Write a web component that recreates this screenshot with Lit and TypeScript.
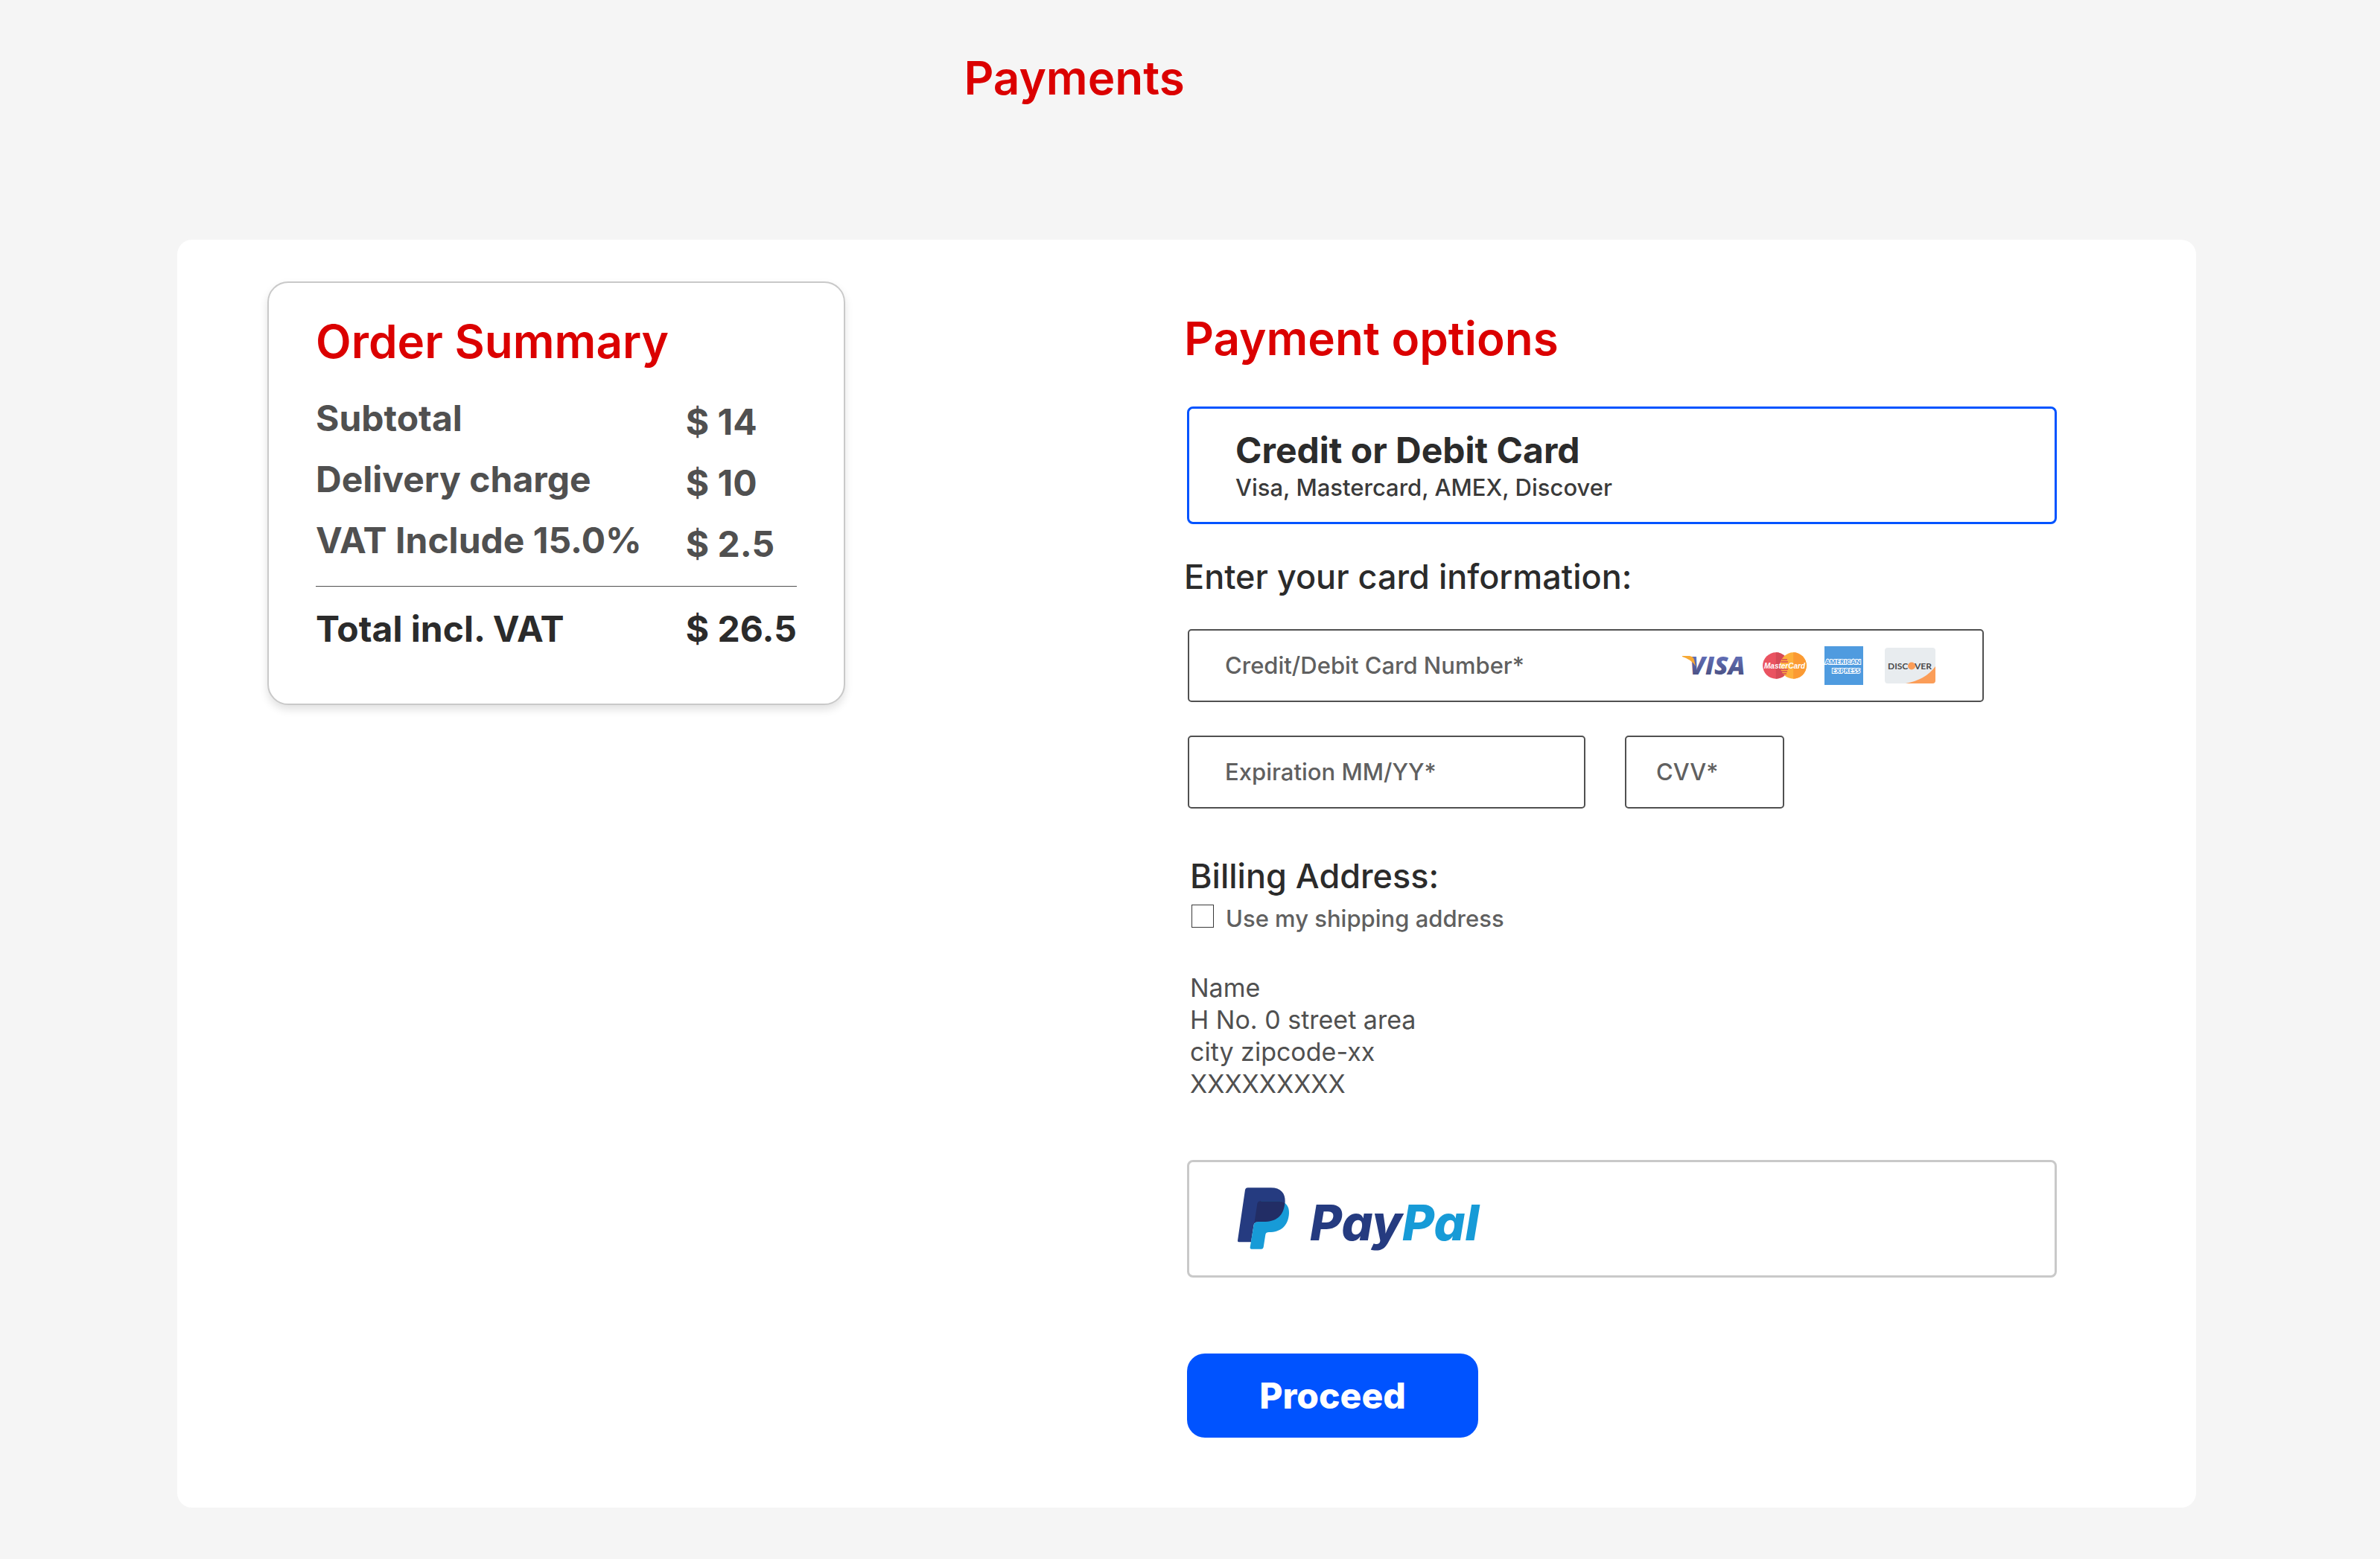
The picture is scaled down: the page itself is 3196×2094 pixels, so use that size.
import { LitElement, html, css, svg } from "lit";
import { customElement, property, state } from "lit/decorators.js";

interface Line {
  label: string;
  amount: string;
}

const LINES: Line[] = [
  { label: "Subtotal", amount: "$ 14" },
  { label: "Delivery charge", amount: "$ 10" },
  { label: "VAT Include 15.0%", amount: "$ 2.5" },
];

const visa = svg`
  <svg width="88" height="52" viewBox="0 -13 88 52" role="img" aria-label="Visa">
    <defs>
      <linearGradient id="visa-ink" x1="0" y1="0" x2="0" y2="1">
        <stop offset="0.3" stop-color="#5f6bb2" />
        <stop offset="0.9" stop-color="#484d7c" />
      </linearGradient>
    </defs>
    <text x="10" y="25" class="visa" fill="url(#visa-ink)">VISA</text>
    <path d="M0 0H10Q15 1 16 5L18 14Q13 5 0 1Z" fill="#f7a934" />
  </svg>`;

const mastercard = svg`
  <svg width="59" height="36" viewBox="0 0 59 36" role="img" aria-label="MasterCard">
    <circle cx="17.8" cy="18" r="17.7" fill="#ea5361" />
    <path d="M17.8 .3a17.7 17.7 0 0 1 0 35.4Z" fill="#d64a57" />
    <circle cx="41.2" cy="18" r="17.7" fill="#fdb03c" />
    <path d="M41.2 .3a17.7 17.7 0 0 1 0 35.4Z" fill="#fb9a33" />
    <path d="M26 10h7M25 13h9M24 23h10M25 26h8M27 29h5" stroke="#d64a57" stroke-width="1.4" />
    <text x="2" y="22" class="mc">MasterCard</text>
  </svg>`;

const amex = svg`
  <svg width="52" height="52" viewBox="0 0 52 52" role="img" aria-label="American Express">
    <rect width="52" height="52" fill="#4f9bdf" />
    <text x="1" y="24" class="amex">AMERICAN</text>
    <text x="10" y="36" class="amex">EXPRESS</text>
  </svg>`;

const discover = svg`
  <svg width="68" height="48" viewBox="0 0 68 48" role="img" aria-label="Discover">
    <rect width="68" height="48" rx="4" fill="#e8ecef" />
    <path d="M28 48Q55 43 68 25V44Q68 48 64 48Z" fill="#fb9d58" />
    <text x="4" y="29" class="disc">DISC</text>
    <circle cx="36" cy="24.5" r="5" fill="#fb9d58" />
    <text x="40" y="29" class="disc">VER</text>
  </svg>`;

const paypal = svg`
  <svg width="330" height="84" viewBox="0 0 330 84" role="img" aria-label="PayPal" overflow="visible">
    <g transform="scale(.3333) translate(-66 -74)">
      <path fill="#253b80" d="M107 75H200C240 75 258 98 257 130C255 185 225 212 170 212H148Q134 212 131 224L120 294H71Q65 294 66 288L96 84Q98 75 107 75Z" />
      <path fill="#179bd7" d="M160 129H235C262 133 274 152 273 178C270 228 240 254 192 254Q180 254 178 264L170 315Q169 322 162 322H121Q115 322 116 315L131 224Q134 212 148 212L160 129Z" />
      <path fill="#222d65" d="M158 129H236Q248 131 256 136C252 188 222 212 170 212H148Q137 212 133 219L145 139Q147 130 158 129Z" />
    </g>
    <text x="97" y="71" class="pp"><tspan fill="#253b80">Pay</tspan><tspan fill="#179bd7">Pal</tspan></text>
  </svg>`;

@customElement("order-summary")
export class OrderSummary extends LitElement {
  @property({ attribute: false }) lines: Line[] = [];
  @property() total = "";

  static styles = css`
    :host {
      display: block;
      box-sizing: border-box;
      padding: 41px 63px 71px;
      border: 2px solid #c9c9c9;
      border-radius: 28px;
      background: #fff;
      box-shadow: 0 6px 12px rgba(0, 0, 0, 0.12);
    }
    h2 {
      margin: 0 0 36px;
      color: #db0000;
      font-size: 62px;
      line-height: 76px;
      font-weight: 600;
    }
    table {
      width: 100%;
      border-collapse: collapse;
      font-size: 48px;
      line-height: 58px;
      font-weight: 700;
      color: #505050;
      white-space: nowrap;
    }
    th,
    td {
      padding: 0 0 24px;
      text-align: left;
      font-weight: inherit;
      vertical-align: top;
    }
    td {
      width: 23%;
    }
    tbody td {
      padding: 5px 0 19px;
    }
    tbody tr:last-child th {
      padding-bottom: 32px;
    }
    tfoot {
      color: #2b2b2b;
      border-top: 1px solid #505050;
    }
    tfoot th,
    tfoot td {
      padding: 28px 0 0;
    }
  `;

  render() {
    return html`
      <h2>Order Summary</h2>
      <table>
        <tbody>
          ${this.lines.map(
            (l) => html`<tr><th scope="row">${l.label}</th><td>${l.amount}</td></tr>`
          )}
        </tbody>
        <tfoot>
          <tr><th scope="row">Total incl. VAT</th><td>${this.total}</td></tr>
        </tfoot>
      </table>
    `;
  }
}

@customElement("payment-form")
export class PaymentForm extends LitElement {
  @state() private method = "card";

  static styles = css`
    :host {
      display: block;
      padding-top: 39px;
    }
    form {
      display: flex;
      flex-direction: column;
    }
    h2 {
      margin: 0;
      color: #db0000;
      font-size: 62px;
      line-height: 76px;
      font-weight: 600;
    }
    h3 {
      margin: 0;
      color: #2b2b2b;
      font-size: 45px;
      line-height: 54px;
      font-weight: 500;
    }
    .option {
      position: relative;
      display: flex;
      box-sizing: border-box;
      min-height: 158px;
      margin-left: 4px;
      padding: 27px 62px;
      border: 3px solid #c9c9c9;
      border-radius: 8px;
      cursor: pointer;
    }
    .option.selected {
      border-color: #0053ff;
    }
    .option input {
      position: absolute;
      opacity: 0;
      margin: 0;
    }
    .card {
      margin-top: 53px;
      flex-direction: column;
      gap: 2px;
    }
    .title {
      color: #2b2b2b;
      font-size: 48px;
      line-height: 58px;
      font-weight: 700;
    }
    .hint {
      color: #3a3a3a;
      font-size: 31px;
      line-height: 38px;
      font-weight: 500;
    }
    .info {
      margin-top: 44px;
    }
    .fields {
      display: grid;
      grid-template-columns: minmax(0, 534fr) minmax(0, 214fr) minmax(0, 215fr);
      column-gap: 53px;
      row-gap: 45px;
      margin: 43px 98px 0 5px;
    }
    .field {
      display: flex;
      align-items: center;
      box-sizing: border-box;
      height: 98px;
      border: 2px solid #505050;
      border-radius: 5px;
      padding: 0 48px;
    }
    .number {
      grid-column: 1 / 4;
      padding-right: 63px;
    }
    .cvv {
      padding: 0 40px;
    }
    .field input {
      flex: 1;
      min-width: 0;
      padding: 0;
      border: 0;
      outline: 0;
      background: none;
      font: inherit;
      font-size: 31px;
      line-height: 38px;
      font-weight: 500;
      color: #2b2b2b;
    }
    .field input::placeholder {
      color: #606060;
      opacity: 1;
    }
    .brands {
      display: flex;
      align-items: center;
      gap: 24px;
    }
    .brands svg:first-child {
      margin-right: -4px;
    }
    .brands svg:last-child {
      margin-left: 5px;
    }
    .visa {
      font: italic 800 34px "Open Sans", sans-serif;
    }
    .mc {
      font: italic 700 10px "Liberation Sans", sans-serif;
      fill: #fff;
    }
    .amex {
      font: 700 9px "Open Sans", sans-serif;
      fill: #4f9bdf;
      stroke: #fff;
      stroke-width: 2px;
      paint-order: stroke;
    }
    .disc {
      font: 700 12px Lato, sans-serif;
      fill: #4a4a4a;
    }
    .pp {
      font: italic 800 66px Inter, sans-serif;
    }
    .billing {
      padding-left: 8px;
      margin-top: 64px;
    }
    .same {
      display: flex;
      gap: 16px;
      margin-top: 11px;
      padding-left: 2px;
      color: #606060;
      font-size: 31px;
      line-height: 38px;
      font-weight: 500;
    }
    .same input {
      appearance: none;
      box-sizing: border-box;
      width: 30px;
      height: 31px;
      margin: 0;
      border: 1px solid #3a3a3a;
      background: #fff;
    }
    .same input:checked {
      background: #0053ff;
    }
    address {
      margin-top: 52px;
      color: #505050;
      font-size: 34px;
      line-height: 43px;
      font-style: normal;
    }
    address p {
      margin: 0;
    }
    .paypal {
      margin-top: 81px;
      align-items: center;
      padding: 0 65px;
    }
    button {
      align-self: flex-start;
      width: 391px;
      height: 113px;
      margin: 102px 0 0 4px;
      border: 0;
      border-radius: 24px;
      background: #0053ff;
      color: #fff;
      font: inherit;
      font-size: 48px;
      font-weight: 800;
      cursor: pointer;
    }
  `;

  private pick(method: string) {
    this.method = method;
  }

  render() {
    return html`
      <form @submit=${(e: Event) => e.preventDefault()}>
        <h2>Payment options</h2>
        <label class="option card ${this.method === "card" ? "selected" : ""}">
          <input type="radio" name="method" value="card"
            .checked=${this.method === "card"} @change=${() => this.pick("card")} />
          <span class="title">Credit or Debit Card</span>
          <span class="hint">Visa, Mastercard, AMEX, Discover</span>
        </label>

        <h3 class="info">Enter your card information:</h3>
        <div class="fields">
          <div class="field number">
            <input type="text" inputmode="numeric" aria-label="Credit/Debit Card Number" placeholder="Credit/Debit Card Number*" />
            <div class="brands">${visa}${mastercard}${amex}${discover}</div>
          </div>
          <div class="field">
            <input type="text" aria-label="Expiration MM/YY" placeholder="Expiration MM/YY*" />
          </div>
          <div class="field cvv">
            <input type="text" inputmode="numeric" aria-label="CVV" placeholder="CVV*" />
          </div>
        </div>

        <section class="billing">
          <h3>Billing Address:</h3>
          <label class="same"><input type="checkbox" />Use my shipping address</label>
          <address>
            <p>Name</p>
            <p>H No. 0 street area</p>
            <p>city zipcode-xx</p>
            <p>XXXXXXXXX</p>
          </address>
        </section>

        <label class="option paypal ${this.method === "paypal" ? "selected" : ""}">
          <input type="radio" name="method" value="paypal"
            .checked=${this.method === "paypal"} @change=${() => this.pick("paypal")} />
          ${paypal}
        </label>
        <button type="submit">Proceed</button>
      </form>
    `;
  }
}

@customElement("app-root")
export class AppRoot extends LitElement {
  static styles = css`
    :host {
      display: block;
      box-sizing: border-box;
      min-height: 100vh;
      padding-bottom: 69px;
      background: #f5f5f5;
      font-family: Inter, "Liberation Sans", sans-serif;
    }
    header {
      padding: 67px 0 179px 40.5%;
    }
    h1 {
      margin: 0;
      color: #db0000;
      font-size: 62px;
      line-height: 76px;
      font-weight: 600;
    }
    main {
      display: grid;
      grid-template-columns: minmax(0, 776fr) minmax(0, 1172fr);
      column-gap: 455px;
      align-items: start;
      margin: 0 247px 0 238px;
      padding: 56px 187px 94px 121px;
      border-radius: 20px;
      background: #fff;
    }
  `;

  render() {
    return html`
      <header><h1>Payments</h1></header>
      <main>
        <order-summary .lines=${LINES} total="$ 26.5"></order-summary>
        <payment-form></payment-form>
      </main>
    `;
  }
}
